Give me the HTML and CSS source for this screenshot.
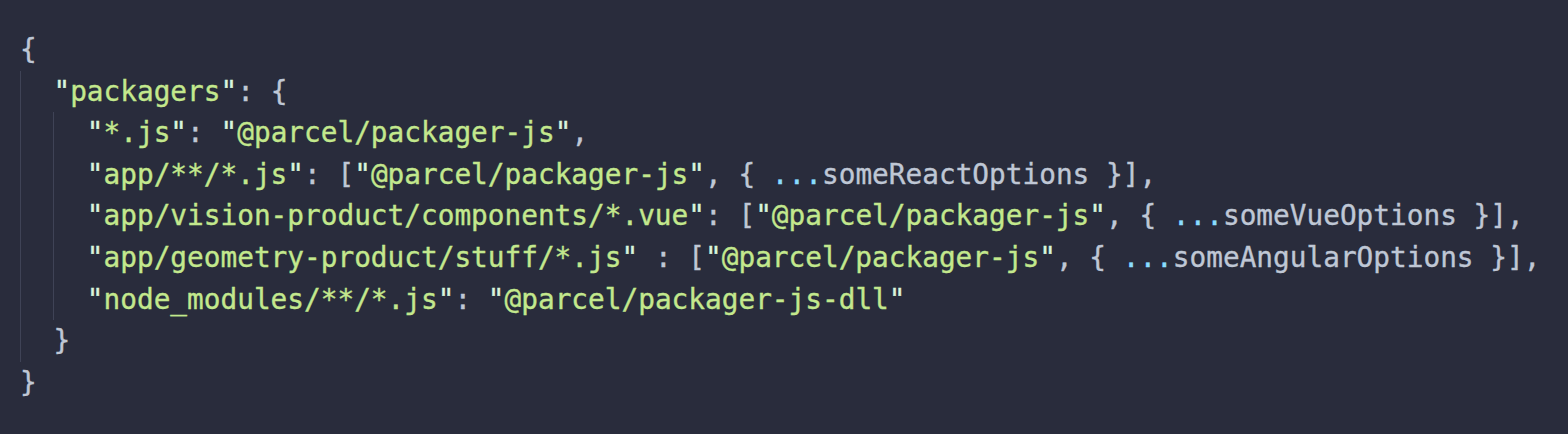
FILE: index.html
```html
<!DOCTYPE html>
<html>
<head>
<meta charset="utf-8">
<link rel="stylesheet" href="styles.css">
</head>
<body>
<div class="code">
  <div class="line"><span class="p">{</span></div>
  <div class="indent">
    <div class="line"><span class="q">"</span><span class="s">packagers</span><span class="q">"</span><span class="p">: {</span></div>
    <div class="indent">
      <div class="line"><span class="q">"</span><span class="s">*.js</span><span class="q">"</span><span class="p">: </span><span class="q">"</span><span class="s">@parcel/packager-js</span><span class="q">"</span><span class="p">,</span></div>
      <div class="line"><span class="q">"</span><span class="s">app/**/*.js</span><span class="q">"</span><span class="p">: [</span><span class="q">"</span><span class="s">@parcel/packager-js</span><span class="q">"</span><span class="p">, { </span><span class="o">...</span><span class="p">someReactOptions }],</span></div>
      <div class="line"><span class="q">"</span><span class="s">app/vision-product/components/*.vue</span><span class="q">"</span><span class="p">: [</span><span class="q">"</span><span class="s">@parcel/packager-js</span><span class="q">"</span><span class="p">, { </span><span class="o">...</span><span class="p">someVueOptions }],</span></div>
      <div class="line"><span class="q">"</span><span class="s">app/geometry-product/stuff/*.js</span><span class="q">"</span><span class="p"> : [</span><span class="q">"</span><span class="s">@parcel/packager-js</span><span class="q">"</span><span class="p">, { </span><span class="o">...</span><span class="p">someAngularOptions }],</span></div>
      <div class="line"><span class="q">"</span><span class="s">node_modules/**/*.js</span><span class="q">"</span><span class="p">: </span><span class="q">"</span><span class="s">@parcel/packager-js-dll</span><span class="q">"</span></div>
    </div>
    <div class="line"><span class="p">}</span></div>
  </div>
  <div class="line"><span class="p">}</span></div>
</div>
</body>
</html>
```
FILE: styles.css
```css
html, body {
  margin: 0;
  padding: 0;
  background: #292c3c;
}
body {
  width: 1568px;
  height: 434px;
  overflow: hidden;
}
.code {
  padding: 29px 0 0 20px;
  font-family: "DejaVu Sans Mono", "Liberation Mono", monospace;
  font-size: 27.75px;
  line-height: 41.6px;
  color: #bfc7d5;
  -webkit-text-stroke: 0.35px currentColor;
}
.line {
  height: 41.6px;
  white-space: pre;
}
.indent {
  border-left: 1px solid #3f4356;
  padding-left: calc(2ch - 1px);
}
.p { color: #bfc7d5; }
.s { color: #c3e88d; }
.q { color: #d9f5dd; }
.o { color: #89ddff; }
```
